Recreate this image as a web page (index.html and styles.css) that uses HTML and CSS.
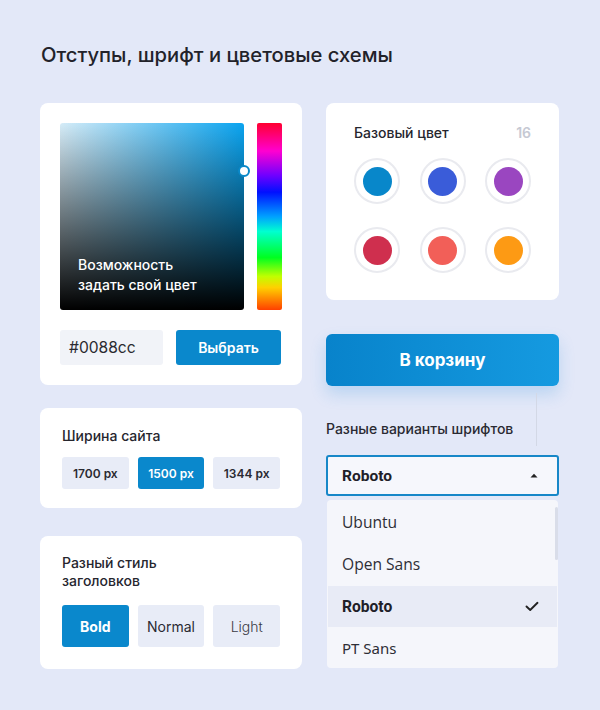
FILE: index.html
```html
<!DOCTYPE html>
<html lang="ru">
<head>
<meta charset="utf-8">
<title>Отступы, шрифт и цветовые схемы</title>
<link rel="stylesheet" href="styles.css">
</head>
<body>
<div class="page">
  <h1 class="title">Отступы, шрифт и цветовые схемы</h1>
  <div class="columns">
    <div class="col-left">
      <div class="card card-picker">
        <div class="picker">
          <div class="sv">
            <span class="sv-handle"></span>
            <div class="sv-text">Возможность<br>задать свой цвет</div>
          </div>
          <div class="hue"></div>
        </div>
        <div class="picker-row">
          <div class="hex-input">#0088cc</div>
          <button class="btn-primary">Выбрать</button>
        </div>
      </div>

      <div class="card card-width">
        <div class="card-label">Ширина сайта</div>
        <div class="seg seg-small">
          <span class="seg-item">1700 px</span>
          <span class="seg-item active">1500 px</span>
          <span class="seg-item">1344 px</span>
        </div>
      </div>

      <div class="card card-style">
        <div class="card-label narrow">Разный стиль заголовков</div>
        <div class="seg seg-large">
          <span class="seg-item active bold">Bold</span>
          <span class="seg-item normal">Normal</span>
          <span class="seg-item light">Light</span>
        </div>
      </div>
    </div>

    <div class="col-right">
      <div class="card card-colors">
        <div class="colors-head">
          <span class="card-label">Базовый цвет</span>
          <span class="count">16</span>
        </div>
        <div class="swatches">
          <span class="swatch"><span class="dot c1"></span></span>
          <span class="swatch"><span class="dot c2"></span></span>
          <span class="swatch"><span class="dot c3"></span></span>
          <span class="swatch"><span class="dot c4"></span></span>
          <span class="swatch"><span class="dot c5"></span></span>
          <span class="swatch"><span class="dot c6"></span></span>
        </div>
      </div>

      <button class="btn-cart">В корзину</button>

      <div class="fonts-head">
        <span class="fonts-label">Разные варианты шрифтов</span>
        <span class="vline"></span>
      </div>

      <div class="select">
        <span>Roboto</span>
        <svg class="caret" width="8" height="5" viewBox="0 0 8 5"><path d="M0.5 4.5 L4 0.8 L7.5 4.5 Z" fill="#222"/></svg>
      </div>

      <div class="dropdown">
        <div class="opt f-ubuntu">Ubuntu</div>
        <div class="opt f-open">Open Sans</div>
        <div class="opt f-roboto selected">Roboto
          <svg class="check" width="14" height="11" viewBox="0 0 14 11"><path d="M1.5 5.5 L5.2 9 L12.5 1.8" fill="none" stroke="#222" stroke-width="1.9" stroke-linecap="round" stroke-linejoin="round"/></svg>
        </div>
        <div class="opt f-pt">PT Sans</div>
        <span class="scroll-thumb"></span>
      </div>
    </div>
  </div>
</div>
</body>
</html>
```

FILE: styles.css
```css
* { box-sizing: border-box; }

body {
  margin: 0;
  background: #e3e8f8;
  font-family: Inter, "Noto Sans", "Liberation Sans", sans-serif;
  color: #24242c;
}

.page {
  padding: 43px 40px 0 40px;
}

.title {
  margin: 0 0 36px 1px;
  font-size: 20.2px;
  line-height: 24px;
  font-weight: 500;
  color: #22222a;
}

.columns {
  display: flex;
  gap: 24px;
  align-items: flex-start;
}

.col-left {
  width: 262px;
  display: flex;
  flex-direction: column;
}

.col-right {
  width: 233px;
  display: flex;
  flex-direction: column;
}

.card {
  background: #fff;
  border-radius: 8px;
}

/* ---------- color picker ---------- */
.card-picker {
  padding: 20px;
  height: 282px;
}

.picker {
  display: flex;
  gap: 13px;
  height: 187px;
}

.sv {
  position: relative;
  width: 184px;
  border-radius: 3px;
  background:
    linear-gradient(to bottom, rgba(0,0,0,0) 0%, rgba(0,0,0,1) 100%),
    linear-gradient(to right, rgba(225,240,248,0.95) 0%, rgba(255,255,255,0) 100%),
    #0aa4f0;
  display: flex;
  flex-direction: column;
  justify-content: flex-end;
  padding: 0 0 15px 18px;
}

.sv-text {
  color: #fff;
  font-size: 14px;
  line-height: 20px;
  font-weight: 500;
}

.sv-handle {
  position: absolute;
  right: -6px;
  top: 42px;
  width: 12px;
  height: 12px;
  border-radius: 50%;
  background: #fff;
  border: 2px solid #0a88c8;
}

.hue {
  width: 25px;
  border-radius: 2px;
  background: linear-gradient(to bottom,
    #ff0030 0%, #ff00d0 15%, #7000ff 28%, #0010ff 37%, #00a0ff 50%,
    #00ffd0 58%, #00ff20 72%, #c0ff00 82%, #ffd000 88%, #ff4000 100%);
}

.picker-row {
  display: flex;
  gap: 13px;
  margin-top: 20px;
  height: 35px;
}

.hex-input {
  width: 103px;
  background: #f1f3f8;
  border-radius: 3px;
  font-size: 15.6px;
  line-height: 35px;
  padding-left: 9px;
  color: #2a2a30;
  font-family: Inter, sans-serif;
}

.btn-primary {
  width: 105px;
  border: 0;
  border-radius: 3px;
  background: #0a88cc;
  color: #fff;
  font-family: Inter, sans-serif;
  font-size: 14px;
  font-weight: 600;
  padding: 0;
}

/* ---------- cards with segments ---------- */
.card-label {
  font-size: 14px;
  line-height: 18px;
  font-weight: 500;
  color: #26262e;
}

.card-label.narrow {
  max-width: 130px;
}

.card-width {
  margin-top: 23px;
  height: 100px;
  padding: 19px 22px 0 22px;
}

.card-style {
  margin-top: 28px;
  height: 133px;
  padding: 18px 22px 0 22px;
}

.seg {
  display: flex;
  gap: 9px;
}

.seg-small {
  margin-top: 12px;
}

.seg-large {
  margin-top: 15px;
}

.seg-item {
  display: flex;
  align-items: center;
  justify-content: center;
  width: 67px;
  background: #e8ecf7;
  border-radius: 3px;
  color: #2a2a32;
}

.seg-small .seg-item {
  height: 32px;
  font-size: 12px;
  font-weight: 600;
}

.seg-large .seg-item {
  height: 42px;
  font-size: 14px;
}

.seg-item.active {
  background: #0a88cc;
  color: #fff;
}

.seg-item.bold { font-weight: 700; }
.seg-item.normal { font-weight: 400; }
.seg-item.light { font-weight: 300; color: #3a3a44; }

/* ---------- base colors ---------- */
.card-colors {
  height: 197px;
  padding: 21px 28px 0 28px;
}

.colors-head {
  display: flex;
  justify-content: space-between;
  align-items: center;
}

.count {
  font-size: 14px;
  font-weight: 600;
  color: #c6c9d3;
  line-height: 18px;
}

.swatches {
  margin-top: 16px;
  display: grid;
  grid-template-columns: repeat(3, 46px);
  justify-content: space-between;
  row-gap: 23px;
}

.swatch {
  width: 46px;
  height: 46px;
  border-radius: 50%;
  border: 2px solid #e9eaef;
  display: flex;
  align-items: center;
  justify-content: center;
}

.dot {
  width: 29px;
  height: 29px;
  border-radius: 50%;
}

.c1 { background: #0887ca; }
.c2 { background: #3a5cd9; }
.c3 { background: #9a46c0; }
.c4 { background: #cf2f4e; }
.c5 { background: #f25f58; }
.c6 { background: #fd9a14; }

/* ---------- cart button ---------- */
.btn-cart {
  margin-top: 34px;
  height: 52px;
  border: 0;
  border-radius: 6px;
  background: linear-gradient(to right, #0883cb 0%, #159ae0 100%);
  color: #fff;
  font-family: Inter, sans-serif;
  font-size: 17px;
  font-weight: 700;
  box-shadow: 0 8px 16px rgba(40, 140, 220, 0.22);
}

/* ---------- fonts select ---------- */
.fonts-head {
  margin-top: 7px;
  display: flex;
  justify-content: space-between;
  height: 53px;
}

.fonts-label {
  align-self: flex-end;
  margin-bottom: 8px;
  font-size: 14px;
  line-height: 18px;
  font-weight: 500;
  color: #2a2a32;
}

.vline {
  width: 1px;
  background: #d3d8e6;
  margin-right: 22px;
}

.select {
  margin-top: 9px;
  height: 41px;
  border: 2px solid #1787c8;
  border-radius: 3px;
  background: #f6f7fc;
  display: flex;
  align-items: center;
  justify-content: space-between;
  padding: 0 19px 0 14px;
  font-family: Roboto, sans-serif;
  font-size: 15.5px;
  font-weight: 700;
  color: #202028;
}

.dropdown {
  position: relative;
  margin: 4px 1px 0 1px;
  height: 168px;
  overflow: hidden;
  background: #f5f6fb;
  border-radius: 4px;
  padding-top: 1px;
}

.opt {
  height: 42px;
  display: flex;
  align-items: center;
  justify-content: space-between;
  padding: 0 19px 0 15px;
  font-size: 15.6px;
  color: #2e2e36;
}

.opt.selected {
  background: #e8ebf6;
  margin: 1px 1px 0 1px;
  padding-left: 14px;
  padding-right: 18px;
  height: 41px;
}

.f-ubuntu { font-family: "Open Sans", "Noto Sans", sans-serif; }
.f-open { font-family: "Open Sans", sans-serif; }
.f-roboto { font-family: Roboto, sans-serif; font-weight: 700; color: #202028; }
.f-pt { font-family: "Noto Sans", "Open Sans", sans-serif; font-size: 15px; }

.scroll-thumb {
  position: absolute;
  right: 0;
  top: 7px;
  width: 3px;
  height: 53px;
  border-radius: 2px;
  background: #d9dde9;
}
```
